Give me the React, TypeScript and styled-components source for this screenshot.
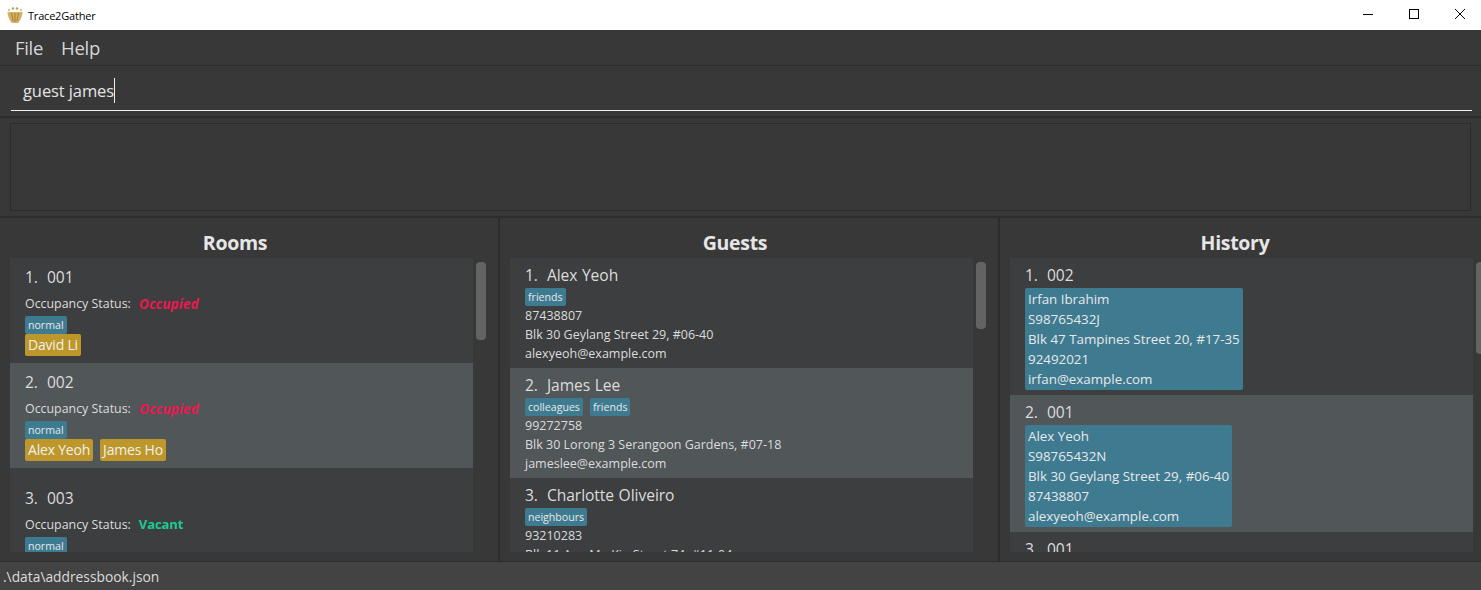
import styled, { createGlobalStyle } from 'styled-components';

const GlobalStyle = createGlobalStyle`
  html, body {
    margin: 0;
    height: 100%;
    overflow: hidden;
    background: #383838;
  }
  * {
    box-sizing: border-box;
  }
`;

const Window = styled.div`
  width: 1481px;
  height: 590px;
  display: flex;
  flex-direction: column;
  overflow: hidden;
  background: #383838;
  font-family: "Open Sans", "Noto Sans", sans-serif;
  color: #dcdcdc;
`;

const TitleBar = styled.div`
  height: 30px;
  flex: none;
  display: flex;
  align-items: center;
  background: #fff;
  color: #000;
  padding-left: 7px;
  font-size: 11px;
  letter-spacing: -0.2px;
`;

const TitleText = styled.span`
  margin-left: 5px;
  flex: 1;
`;

const WindowControls = styled.div`
  display: flex;
  margin-right: -2px;
`;

const WindowButton = styled.div`
  width: 46px;
  height: 30px;
  padding-bottom: 2px;
  display: flex;
  align-items: center;
  justify-content: center;
`;

const MenuBar = styled.div`
  height: 36px;
  flex: none;
  display: flex;
  align-items: center;
  gap: 18px;
  padding: 0 15px 1px;
  background: #383838;
  border-bottom: 1px solid #2c2c2c;
  font-size: 18.5px;
  letter-spacing: -0.3px;
  color: #d6d6d6;
`;

const CommandBox = styled.div`
  height: 52px;
  flex: none;
  padding: 0 9px 5px 11px;
  background: #383838;
  border-bottom: 2px solid #2c2c2c;
  display: flex;
`;

const CommandInput = styled.div`
  flex: 1;
  display: flex;
  align-items: center;
  padding: 5px 0 0 12px;
  border-bottom: 1px solid #f2f2f2;
  font-size: 16.5px;
  letter-spacing: -0.1px;
  color: #e4e4e4;
`;

const Caret = styled.span`
  width: 1px;
  height: 25px;
  background: #f0f0f0;
`;

const ResultBar = styled.div`
  height: 100px;
  flex: none;
  padding: 5px 10px;
  background: #383838;
  border-bottom: 2px solid #2c2c2c;
`;

const ResultBox = styled.div`
  height: 100%;
  background: #383838;
  border: 1px solid #2b2b2b;
`;

const Panels = styled.div`
  flex: 1;
  min-height: 0;
  display: grid;
  grid-template-columns: 500px 500px 481px;
`;

const Panel = styled.section`
  min-width: 0;
  width: 500px;
  height: 343px;
  display: flex;
  flex-direction: column;
  padding: 0 0 9px 10px;
  border-right: 2px solid #2c2c2c;
`;

const PanelTitle = styled.h2`
  height: 40px;
  flex: none;
  margin: 0;
  padding: 11px 38px 0 0;
  text-align: center;
  font-size: 19.5px;
  line-height: 28px;
  font-weight: 700;
  letter-spacing: -0.3px;
  color: #e6e6e6;
`;

const PanelBody = styled.div`
  flex: 1;
  min-height: 0;
  display: flex;
`;

const List = styled.div`
  width: 463px;
  flex: none;
  overflow: hidden;
  background: #3c3e3f;
`;

const ScrollTrack = styled.div`
  width: 10px;
  margin-left: 3px;
  padding-top: 4px;
`;

const ScrollThumb = styled.div<{ $height: number }>`
  height: ${(p) => p.$height}px;
  border-radius: 4px;
  background: #636363;
`;

const Card = styled.div<{ $selected?: boolean; $height: number; $top: number }>`
  height: ${(p) => p.$height}px;
  padding: ${(p) => p.$top}px 15px 0;
  background: ${(p) => (p.$selected ? '#515658' : '#3c3e3f')};
  overflow: hidden;
`;

const CardTitle = styled.div`
  font-size: 15.6px;
  line-height: 20px;
  letter-spacing: -0.05px;
  word-spacing: 0.5px;
  white-space: pre;
  color: #dcdcdc;
`;

const InfoLine = styled.div`
  font-size: 12.5px;
  line-height: 19px;
  color: #dcdcdc;
`;

const StatusRow = styled.div`
  display: flex;
  align-items: center;
  gap: 8px;
  margin-top: 6px;
  height: 20px;
  font-size: 12.4px;
`;

const StatusValue = styled.span<{ $occupied: boolean }>`
  font-weight: 700;
  font-size: ${(p) => (p.$occupied ? '13.8px' : '13px')};
  font-style: ${(p) => (p.$occupied ? 'italic' : 'normal')};
  letter-spacing: ${(p) => (p.$occupied ? '0' : '-0.1px')};
  color: ${(p) => (p.$occupied ? '#e8194f' : '#1cc994')};
`;

const TagRow = styled.div<{ $spaced?: boolean }>`
  display: flex;
  gap: 7px;
  margin-top: ${(p) => (p.$spaced ? '3px' : '0')};
`;

const Tag = styled.span`
  height: 18px;
  padding: 0 3px;
  border-radius: 2px;
  background: #3e7b91;
  font-size: 10.6px;
  line-height: 18px;
  color: #e8e8e8;
`;

const Occupant = styled.span`
  height: 22px;
  padding: 0 3px;
  border-radius: 2px;
  background: #bd9729;
  font-size: 14px;
  line-height: 22px;
  letter-spacing: -0.2px;
  color: #f0f0f0;
`;

const GuestBlock = styled.div`
  width: fit-content;
  padding: 1px 3px;
  margin-top: 3px;
  border-radius: 2px;
  background: #3e7b91;
  font-size: 13.35px;
  line-height: 20px;
  color: #e8e8e8;
`;

const StatusBar = styled.footer`
  height: 29px;
  flex: none;
  padding: 0 3px;
  display: flex;
  align-items: center;
  background: #434343;
  border-top: 1px solid #2c2c2c;
  font-size: 13.8px;
  color: #dcdcdc;
`;

const rooms = [
  { id: '001', status: 'Occupied', people: ['David Li'], top: 9 },
  { id: '002', status: 'Occupied', people: ['Alex Yeoh', 'James Ho'], selected: true, top: 9 },
  { id: '003', status: 'Vacant', people: [], top: 20 },
];

const guests = [
  {
    name: 'Alex Yeoh',
    tags: ['friends'],
    phone: '87438807',
    address: 'Blk 30 Geylang Street 29, #06-40',
    email: 'alexyeoh@example.com',
  },
  {
    name: 'James Lee',
    tags: ['colleagues', 'friends'],
    phone: '99272758',
    address: 'Blk 30 Lorong 3 Serangoon Gardens, #07-18',
    email: 'jameslee@example.com',
    selected: true,
  },
  {
    name: 'Charlotte Oliveiro',
    tags: ['neighbours'],
    phone: '93210283',
    address: 'Blk 11 Ang Mo Kio Street 74, #11-04',
    email: 'charlotte@example.com',
  },
];

const history = [
  {
    room: '002',
    lines: ['Irfan Ibrahim', 'S98765432J', 'Blk 47 Tampines Street 20, #17-35', '92492021', 'irfan@example.com'],
  },
  {
    room: '001',
    lines: ['Alex Yeoh', 'S98765432N', 'Blk 30 Geylang Street 29, #06-40', '87438807', 'alexyeoh@example.com'],
    selected: true,
  },
  { room: '001', lines: [] },
];

const Logo = () => (
  <svg width="16" height="16" viewBox="0 0 16 16">
    <path d="M0.500 5h15c0 4-2.500 9-4.500 11H5C3 14 0.500 9 0.500 5z" fill="#d6b062" />
    <path d="M4.500 6l1.500 8M8 6v9M11.500 6L10 14" stroke="#a67f33" strokeWidth="1" />
    <circle cx="2" cy="3" r="1" fill="#d6b062" />
    <circle cx="6" cy="1.500" r="1.200" fill="#c59c48" />
    <circle cx="10" cy="1.500" r="1.200" fill="#c59c48" />
    <circle cx="14" cy="3" r="1" fill="#d6b062" />
  </svg>
);

const App = () => {
  return (
    <Window>
      <GlobalStyle />
      <TitleBar>
        <Logo />
        <TitleText>Trace2Gather</TitleText>
        <WindowControls>
          <WindowButton>
            <svg width="10" height="10" viewBox="0 0 10 10">
              <path d="M0 5.500h10" stroke="#000" strokeWidth="1" />
            </svg>
          </WindowButton>
          <WindowButton>
            <svg width="10" height="10" viewBox="0 0 10 10">
              <rect x="0.500" y="0.500" width="9" height="9" fill="none" stroke="#000" strokeWidth="1" />
            </svg>
          </WindowButton>
          <WindowButton>
            <svg width="10" height="10" viewBox="0 0 10 10">
              <path d="M0 0l10 10M10 0L0 10" stroke="#000" strokeWidth="1" />
            </svg>
          </WindowButton>
        </WindowControls>
      </TitleBar>

      <MenuBar>
        <span>File</span>
        <span>Help</span>
      </MenuBar>

      <CommandBox>
        <CommandInput>
          guest james
          <Caret />
        </CommandInput>
      </CommandBox>

      <ResultBar>
        <ResultBox />
      </ResultBar>

      <Panels>
        <Panel>
          <PanelTitle>Rooms</PanelTitle>
          <PanelBody>
            <List>
              {rooms.map((room, i) => (
                <Card key={room.id} $height={i === 2 ? 120 : 105} $top={room.top} $selected={room.selected}>
                  <CardTitle>{`${i + 1}.  ${room.id}`}</CardTitle>
                  <StatusRow>
                    <span>Occupancy Status:</span>
                    <StatusValue $occupied={room.status === 'Occupied'}>{room.status}</StatusValue>
                  </StatusRow>
                  <TagRow $spaced>
                    <Tag>normal</Tag>
                  </TagRow>
                  <TagRow>
                    {room.people.map((name) => (
                      <Occupant key={name}>{name}</Occupant>
                    ))}
                  </TagRow>
                </Card>
              ))}
            </List>
            <ScrollTrack>
              <ScrollThumb $height={78} />
            </ScrollTrack>
          </PanelBody>
        </Panel>

        <Panel>
          <PanelTitle>Guests</PanelTitle>
          <PanelBody>
            <List>
              {guests.map((guest, i) => (
                <Card key={guest.name} $height={110} $top={7} $selected={guest.selected}>
                  <CardTitle>{`${i + 1}.  ${guest.name}`}</CardTitle>
                  <TagRow $spaced>
                    {guest.tags.map((tag) => (
                      <Tag key={tag}>{tag}</Tag>
                    ))}
                  </TagRow>
                  <InfoLine>{guest.phone}</InfoLine>
                  <InfoLine>{guest.address}</InfoLine>
                  <InfoLine>{guest.email}</InfoLine>
                </Card>
              ))}
            </List>
            <ScrollTrack>
              <ScrollThumb $height={67} />
            </ScrollTrack>
          </PanelBody>
        </Panel>

        <Panel>
          <PanelTitle>History</PanelTitle>
          <PanelBody>
            <List>
              {history.map((entry, i) => (
                <Card key={i} $height={137} $top={7} $selected={entry.selected}>
                  <CardTitle>{`${i + 1}.  ${entry.room}`}</CardTitle>
                  {entry.lines.length > 0 && (
                    <GuestBlock>
                      {entry.lines.map((line) => (
                        <div key={line}>{line}</div>
                      ))}
                    </GuestBlock>
                  )}
                </Card>
              ))}
            </List>
            <ScrollTrack>
              <ScrollThumb $height={92} />
            </ScrollTrack>
          </PanelBody>
        </Panel>
      </Panels>

      <StatusBar>.\data\addressbook.json</StatusBar>
    </Window>
  );
};

export default App;
